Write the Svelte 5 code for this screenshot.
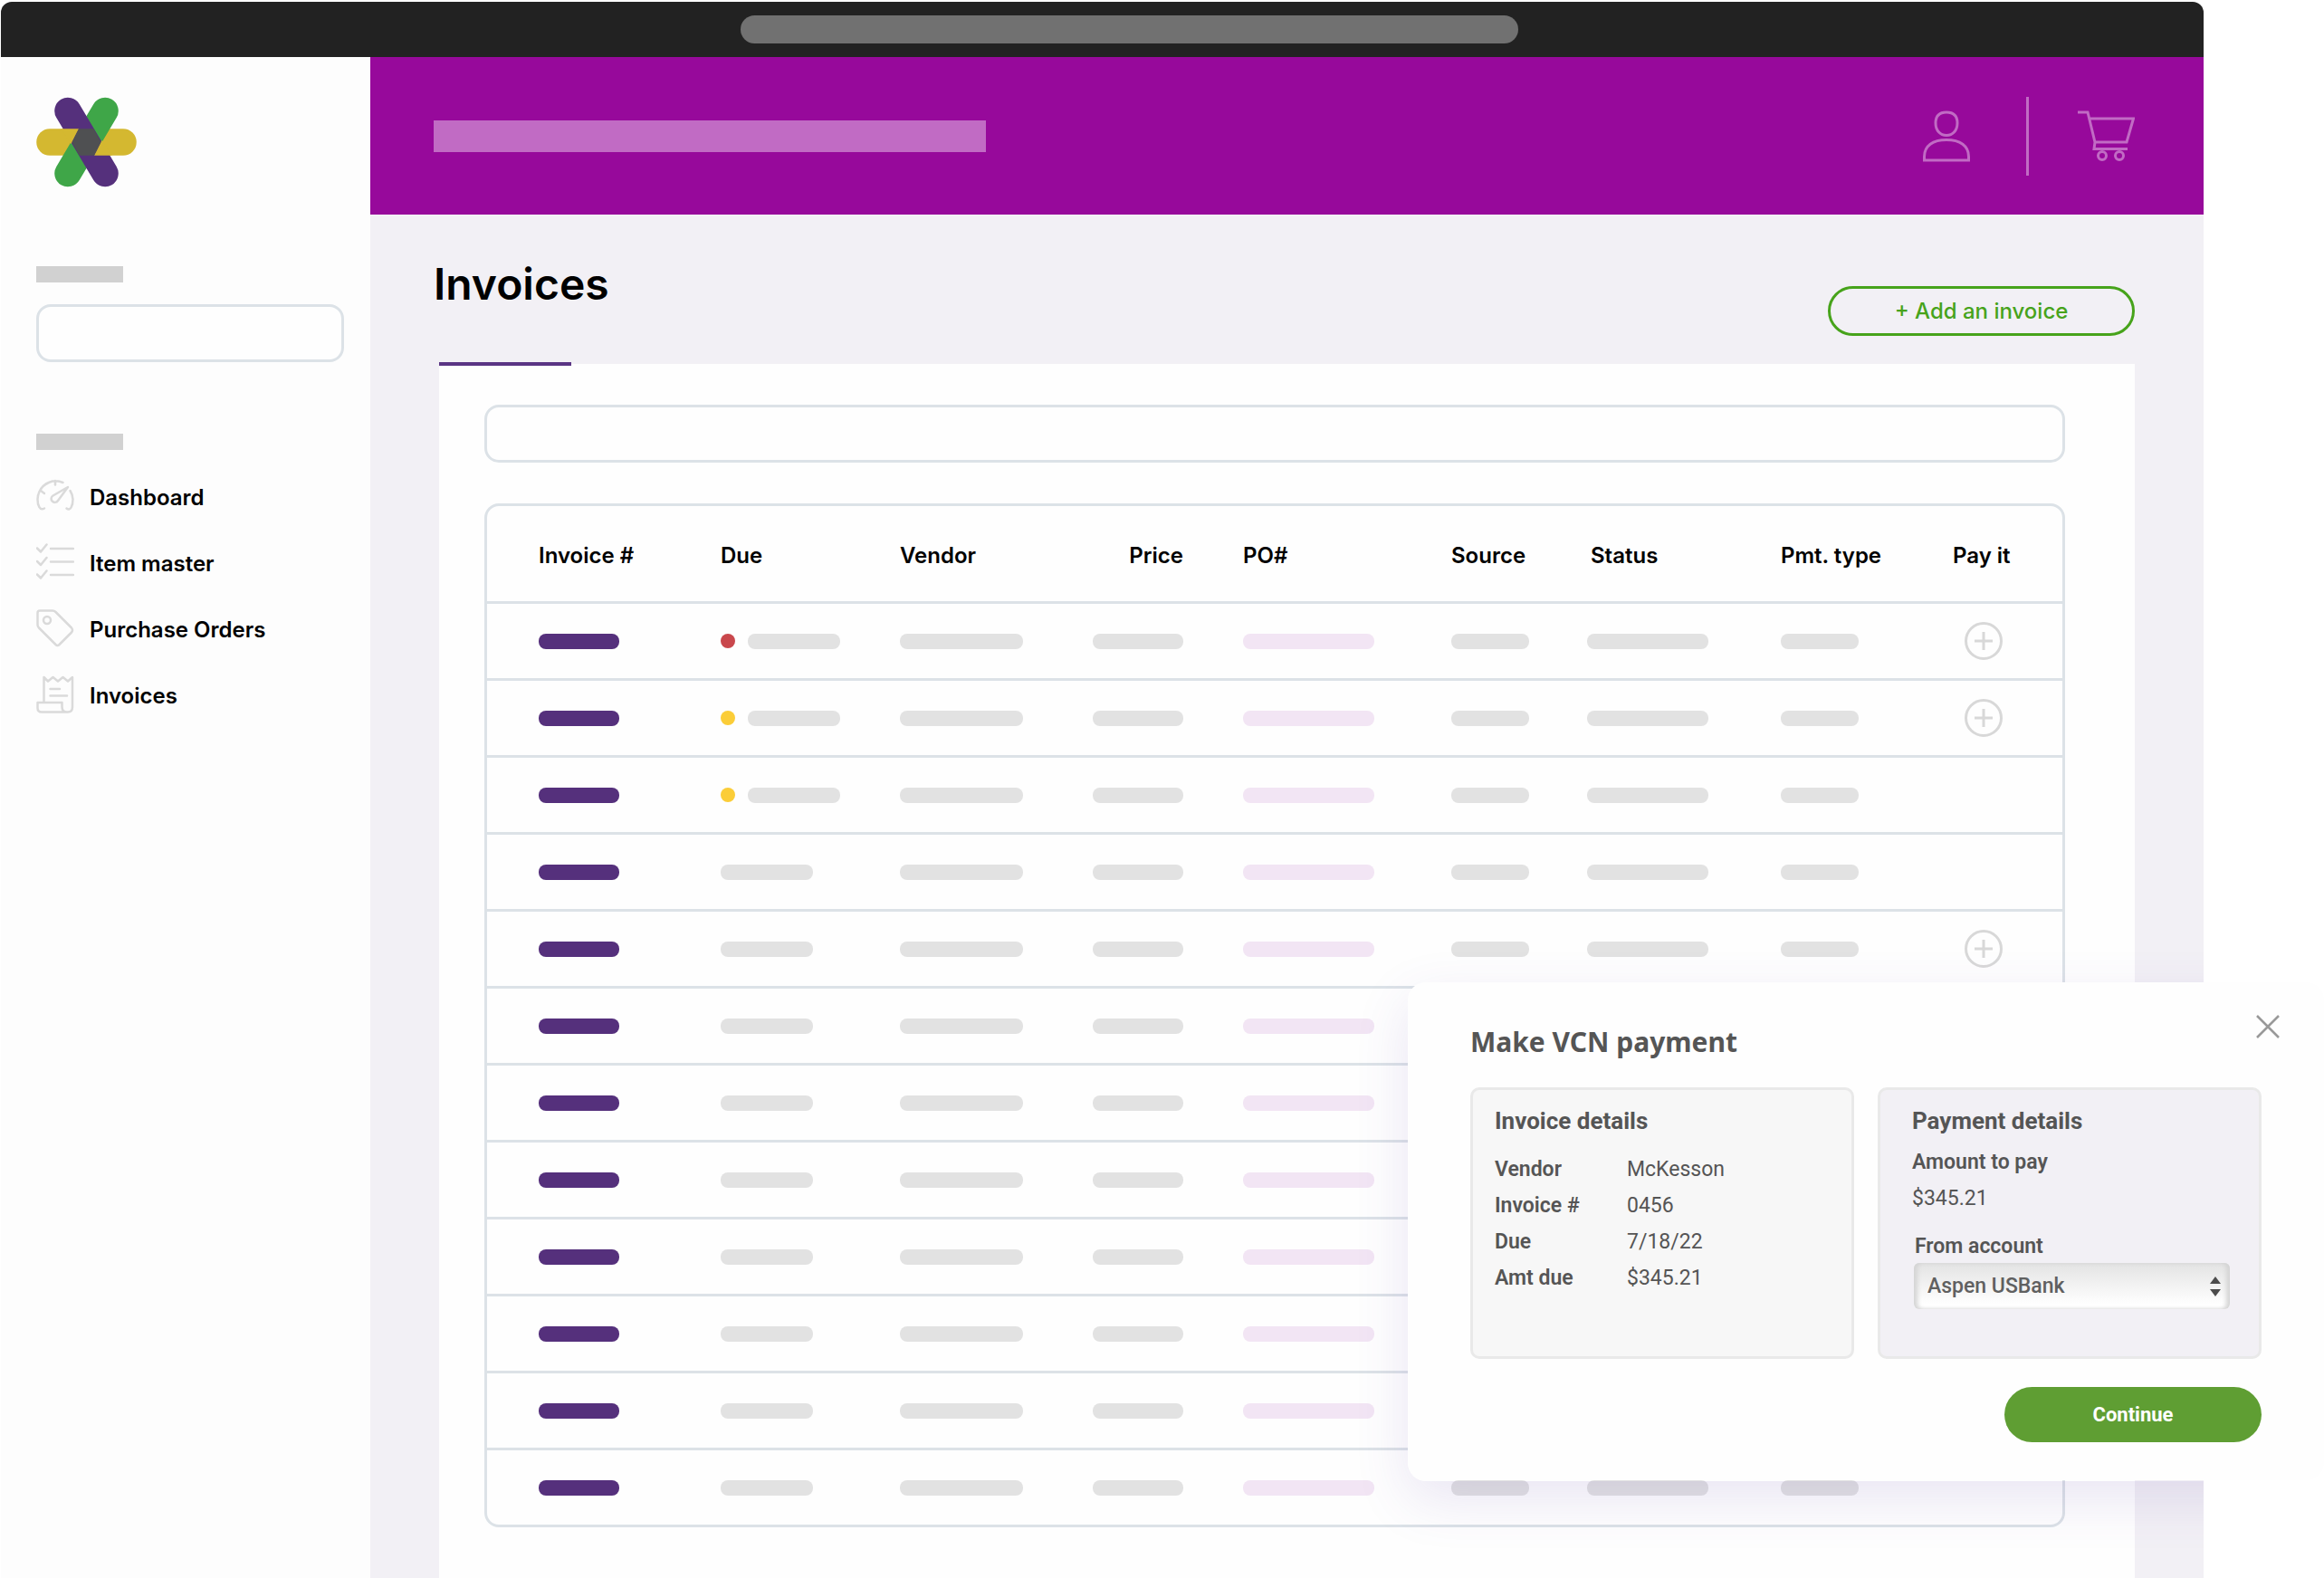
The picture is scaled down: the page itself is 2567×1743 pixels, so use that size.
<script>
  let sidebarSearch = $state('');
  let invoiceSearch = $state('');
  let account = $state('Aspen USBank');
  let showPayment = $state(true);

  const nav = [
    { label: 'Dashboard', icon: 'gauge' },
    { label: 'Item master', icon: 'list' },
    { label: 'Purchase Orders', icon: 'tag' },
    { label: 'Invoices', icon: 'receipt' },
  ];

  const rows = [
    { due: 'late', payable: true },
    { due: 'soon', payable: true },
    { due: 'soon', payable: false },
    { due: '', payable: false },
    { due: '', payable: true },
    { due: '', payable: false },
    { due: '', payable: false },
    { due: '', payable: false },
    { due: '', payable: false },
    { due: '', payable: false },
    { due: '', payable: false },
    { due: '', payable: false },
  ];

  const details = [
    ['Vendor', 'McKesson'],
    ['Invoice #', '0456'],
    ['Due', '7/18/22'],
    ['Amt due', '$345.21'],
  ];
</script>

<div class="page">
  <div class="window">
    <div class="titlebar"><span class="address"></span></div>

    <div class="body">
      <aside>
        <svg class="logo" viewBox="0 0 112 100" aria-hidden="true">
          <g fill="none" stroke-width="29.500" stroke-linecap="round">
            <path stroke="#d4b830" d="M15 50H96" />
            <path stroke="#3fa648" d="M76 15.500L35 84.500" />
            <path stroke="#55307c" d="M35 15.500L76 84.500" />
          </g>
          <path fill="#d4b830" d="M27 35.300H47L38.500 52ZM84 64.700H64L72.500 48Z" />
          <path fill="#4f5052" d="M47 35.300H63.500L71.500 50L64 64.700H47.500L39.500 50Z" />
        </svg>
        <div class="caption"></div>
        <input class="field side-field" type="text" aria-label="Search" bind:value={sidebarSearch} />
        <div class="caption second"></div>

        <nav>
          {#each nav as item}
            <a href="#{item.icon}">
              <svg viewBox="0 0 42 42" aria-hidden="true">
                {#if item.icon === 'gauge'}
                  <path d="M9 34.500C4 37.500 1.500 31 1.500 24.500A20 20 0 0 1 3.500 16A20 20 0 0 1 29.500 6M33.500 34.500C38 38 40.500 31 40.500 24.500A20 20 0 0 0 37.500 15M21 4V8.500M5 15L9 18M35 11L24 26A4 4 0 1 1 18.500 20.500Z" />
                {:else if item.icon === 'list'}
                  <path d="M16 6H41M16 20.500H41M16 35H41M1 5.500L5 9.500L11.500 1.500M1 20L5 24L11.500 16M1 34.500L5 38.500L11.500 30.500" />
                {:else if item.icon === 'tag'}
                  <path d="M4 1.500H18Q20 1.500 21.500 3L39 20.500Q41 23 39 25.500L25.500 39Q23.500 41 21.500 39L3 20.500Q1.500 19 1.500 17V4Q1.500 1.500 4 1.500Z" />
                  <circle cx="12" cy="12" r="4" />
                {:else}
                  <path d="M8.500 29V2L13 6.500L18.500 2L24 6.500L29.500 2L35 6.500L40 2V35Q40 40.500 35 40.500H6Q1.500 40.500 1.500 36V30H28.500V35Q28.500 40.500 34 40.500M15.500 15H26M15.500 22.500H34" />
                {/if}
              </svg>
              <span>{item.label}</span>
            </a>
          {/each}
        </nav>
      </aside>

      <main>
        <header>
          <div class="headline"></div>
          <div class="actions">
            <button class="icon-btn" aria-label="Account">
              <svg class="user" viewBox="0 0 52 58">
                <path d="M26 3C34 3 38 7 38 15C38 23 33 28.500 26 28.500S14 23 14 15C14 7 18 3 26 3ZM1.500 56V52C1.500 40 11 33.500 26 33.500S50.500 40 50.500 52V56Z" />
              </svg>
            </button>
            <span class="divider"></span>
            <button class="icon-btn" aria-label="Cart">
              <svg class="cart" viewBox="0 0 63 58">
                <path d="M0 3H11L19 36H54L61.500 10H13M19 36L18 43.500H55" />
                <circle cx="27" cy="51" r="4.500" />
                <circle cx="46" cy="51" r="4.500" />
              </svg>
            </button>
          </div>
        </header>

        <div class="page-head">
          <h1>Invoices</h1>
          <button class="add">+ Add an invoice</button>
        </div>

        <section class="card">
          <div class="tab"></div>
          <input class="field" type="text" aria-label="Search invoices" bind:value={invoiceSearch} />

          <div class="table-wrap">
            <table>
              <colgroup>
                <col class="c-invoice" />
                <col class="c-due" />
                <col class="c-vendor" />
                <col class="c-price" />
                <col class="c-po" />
                <col class="c-source" />
                <col class="c-status" />
                <col class="c-type" />
                <col class="c-pay" />
              </colgroup>
              <thead>
                <tr>
                  <th>Invoice #</th>
                  <th>Due</th>
                  <th>Vendor</th>
                  <th class="price"><span>Price</span></th>
                  <th>PO#</th>
                  <th>Source</th>
                  <th class="status">Status</th>
                  <th>Pmt. type</th>
                  <th>Pay it</th>
                </tr>
              </thead>
              <tbody>
                {#each rows as row}
                  <tr>
                    <td><i class="bar invoice"></i></td>
                    <td>
                      <div class="due">
                        {#if row.due}<i class="dot {row.due}"></i>{/if}
                        <i class="bar w102"></i>
                      </div>
                    </td>
                    <td><i class="bar w136"></i></td>
                    <td><i class="bar w100"></i></td>
                    <td><i class="bar po"></i></td>
                    <td><i class="bar w86"></i></td>
                    <td><i class="bar w134"></i></td>
                    <td><i class="bar w86"></i></td>
                    <td>
                      {#if row.payable}
                        <button class="pay" aria-label="Pay invoice" onclick={() => (showPayment = true)}>
                          <svg viewBox="0 0 42 42">
                            <circle cx="21" cy="21" r="19.500" />
                            <path d="M21 11V31M11 21H31" />
                          </svg>
                        </button>
                      {/if}
                    </td>
                  </tr>
                {/each}
              </tbody>
            </table>
          </div>
        </section>
      </main>
    </div>
    {#if showPayment}<div class="glow"></div>{/if}
  </div>

  {#if showPayment}
    <div class="modal" role="dialog" aria-labelledby="pay-title">
      <div class="modal-head">
        <h2 id="pay-title">Make VCN payment</h2>
        <button class="close" aria-label="Close" onclick={() => (showPayment = false)}>
          <svg viewBox="0 0 26 26"><path d="M1 1L25 25M25 1L1 25" /></svg>
        </button>
      </div>

      <div class="panels">
        <section class="panel">
          <h3>Invoice details</h3>
          <dl>
            {#each details as [name, value]}
              <dt>{name}</dt>
              <dd>{value}</dd>
            {/each}
          </dl>
        </section>

        <section class="panel payment">
          <h3>Payment details</h3>
          <div class="amount">
            <strong>Amount to pay</strong>
            <span>$345.21</span>
          </div>
          <label for="account">From account</label>
          <div class="select">
            <select id="account" bind:value={account}>
              <option>Aspen USBank</option>
            </select>
            <svg viewBox="0 0 14 22" aria-hidden="true"><path d="M7 0L13 8H1ZM7 22L13 14H1Z" /></svg>
          </div>
        </section>
      </div>

      <button class="continue">Continue</button>
    </div>
  {/if}
</div>

<style>
  :global(body) {
    background: #fff;
  }

  * {
    box-sizing: border-box;
  }

  .page {
    position: relative;
    min-height: 100vh;
    padding: 2px 133px 0 1px;
    overflow: hidden;
    display: flex;
    font-family: Inter, "Liberation Sans", sans-serif;
    color: #000;
  }

  button {
    padding: 0;
    border: none;
    background: none;
    font-family: inherit;
    cursor: pointer;
  }

  svg {
    display: block;
    fill: none;
  }

  .window {
    position: relative;
    flex: 1;
    display: flex;
    flex-direction: column;
    border-radius: 12px 12px 0 0;
    overflow: hidden;
    background: #fdfdfd;
  }

  .titlebar {
    height: 61px;
    background: #222;
    display: flex;
    align-items: center;
    justify-content: center;
  }

  .address {
    width: 859px;
    height: 31px;
    margin-left: 60px;
    border-radius: 16px;
    background: #717171;
  }

  .body {
    flex: 1;
    display: flex;
  }

  /* sidebar */
  aside {
    width: 408px;
    flex: none;
    padding: 44px 29px 0 39px;
    background: #fdfdfd;
  }

  .logo {
    width: 112px;
    height: 100px;
  }

  .caption {
    width: 96px;
    height: 18px;
    margin-top: 87px;
    background: #d1d1d1;
  }

  .caption.second {
    margin-top: 79px;
  }

  .field {
    display: block;
    width: 100%;
    height: 64px;
    padding: 0 20px;
    border: 3px solid #dce2e7;
    border-radius: 16px;
    background: #fefefe;
    font: 500 24px Inter, sans-serif;
    outline: none;
  }

  .side-field {
    margin-top: 24px;
  }

  nav {
    margin-top: 30px;
    display: flex;
    flex-direction: column;
    gap: 30px;
  }

  nav a {
    height: 43px;
    display: flex;
    gap: 17px;
    color: #000;
    font-size: 24px;
    font-weight: 600;
    line-height: 46px;
    text-decoration: none;
  }

  nav svg {
    width: 42px;
    height: 42px;
    stroke: #dadada;
    stroke-width: 2.5;
    stroke-linecap: round;
    stroke-linejoin: round;
  }

  /* main column */
  main {
    flex: 1;
    display: flex;
    flex-direction: column;
    background: #f2f0f5;
  }

  header {
    height: 174px;
    padding: 0 77px 0 70px;
    display: flex;
    align-items: center;
    justify-content: space-between;
    background: #97099b;
  }

  .headline {
    width: 610px;
    height: 35px;
    background: #c16bc4;
  }

  .actions {
    display: flex;
    align-items: center;
  }

  .icon-btn svg {
    height: 58px;
    stroke: #c16bc4;
    stroke-width: 3;
  }

  .user {
    width: 52px;
  }

  .cart {
    width: 63px;
  }

  .divider {
    width: 3px;
    height: 87px;
    margin: 0 54px 0 62px;
    background: #c16bc4;
  }

  .page-head {
    height: 165px;
    padding: 49px 77px 0 70px;
    display: flex;
    align-items: flex-start;
    justify-content: space-between;
  }

  h1 {
    margin: 0;
    font-size: 48px;
    font-weight: 600;
    line-height: 56px;
  }

  .add {
    width: 339px;
    height: 55px;
    margin-top: 30px;
    border: 3px solid #47a31b;
    border-radius: 28px;
    color: #47a31b;
    font-size: 24px;
    font-weight: 500;
  }

  .card {
    position: relative;
    flex: 1;
    margin: 0 77px 0 76px;
    padding: 45px 77px 58px 50px;
    background: #fefefe;
  }

  .tab {
    position: absolute;
    top: -2px;
    left: 0;
    width: 146px;
    height: 4px;
    background: #5a3584;
  }

  .table-wrap {
    margin-top: 45px;
    border: 3px solid #dce2e7;
    border-radius: 16px;
    overflow: hidden;
  }

  table {
    width: 100%;
    table-layout: fixed;
    border-collapse: separate;
    border-spacing: 0;
  }

  .c-invoice { width: 258px; }
  .c-due { width: 198px; }
  .c-vendor { width: 213px; }
  .c-price { width: 166px; }
  .c-po { width: 230px; }
  .c-source { width: 150px; }
  .c-status { width: 214px; }
  .c-type { width: 190px; }
  .c-pay { width: 121px; }

  th {
    height: 108px;
    padding: 3px 0 0;
    border-bottom: 3px solid #dce2e7;
    font-size: 24px;
    font-weight: 600;
    text-align: left;
    white-space: nowrap;
  }

  th.price span {
    display: block;
    width: 100px;
    text-align: right;
  }

  th.status {
    padding-left: 4px;
  }

  td {
    height: 85px;
    padding: 0;
    border-bottom: 3px solid #dce2e7;
  }

  th:first-child,
  td:first-child {
    padding-left: 57px;
  }

  tr:last-child td {
    height: 82px;
    border-bottom: none;
  }

  .bar {
    display: block;
    height: 17px;
    border-radius: 8px;
    background: #e2e2e2;
  }

  .invoice {
    width: 89px;
    background: #55307c;
  }

  .po {
    width: 145px;
    background: #f2e5f4;
  }

  .w86 { width: 86px; }
  .w100 { width: 100px; }
  .w102 { width: 102px; }
  .w134 { width: 134px; }
  .w136 { width: 136px; }

  .due {
    display: flex;
    align-items: center;
    gap: 14px;
  }

  .dot {
    width: 16px;
    height: 16px;
    border-radius: 50%;
  }

  .late { background: #c9474c; }
  .soon { background: #fbcd38; }

  .pay {
    display: block;
    margin-left: 13px;
  }

  .pay svg {
    width: 42px;
    height: 42px;
    stroke: #d8d8d8;
    stroke-width: 3;
  }

  /* payment dialog */
  .glow {
    position: absolute;
    top: 1083px;
    right: -133px;
    width: 1012px;
    height: 551px;
    border-radius: 20px;
    box-shadow: 0 20px 60px rgba(90, 60, 170, 0.13);
    pointer-events: none;
  }

  .modal {
    position: absolute;
    top: 1085px;
    right: 0;
    width: 1012px;
    padding: 36px 69px 42px;
    border-radius: 20px;
    background: #fefefe;
    font-family: Roboto, sans-serif;
    color: #555;
  }

  .modal-head {
    height: 80px;
    display: flex;
    align-items: flex-start;
    justify-content: space-between;
  }

  h2 {
    margin: 10px 0 0;
    font-family: "Noto Sans", sans-serif;
    font-size: 30px;
    font-weight: 700;
    line-height: 40px;
  }

  .close {
    margin-right: -20px;
  }

  .close svg {
    width: 26px;
    height: 26px;
    stroke: #999;
    stroke-width: 2.5;
  }

  .panels {
    display: grid;
    grid-template-columns: 1fr 1fr;
    gap: 26px;
  }

  .panel {
    min-height: 300px;
    padding: 17px 24px;
    border: 3px solid #e9e9e9;
    border-radius: 10px;
    background: #f7f7f7;
    font-size: 23px;
    line-height: 40px;
  }

  .payment {
    padding: 17px 32px 17px 35px;
    background: #f2f0f5;
  }

  h3 {
    margin: 0;
    font-size: 26px;
    font-weight: 700;
    line-height: 34px;
  }

  dl {
    display: grid;
    grid-template-columns: 146px 1fr;
    margin: 17px 0 0;
  }

  dt,
  .amount strong,
  label {
    font-weight: 600;
  }

  dd {
    margin: 0;
  }

  .amount {
    display: flex;
    flex-direction: column;
    margin-top: 9px;
  }

  label {
    display: block;
    margin-top: 15px;
    padding-left: 3px;
    line-height: 36px;
  }

  .select {
    position: relative;
    margin-left: 2px;
  }

  select {
    appearance: none;
    display: block;
    width: 100%;
    height: 51px;
    padding: 0 40px 0 15px;
    border: none;
    border-radius: 6px;
    background: linear-gradient(#e3e3e3, #fff 90%);
    box-shadow: inset 5px 0 5px -1px #d4d4d4, inset -5px 0 5px -1px #d4d4d4;
    color: #606060;
    font: 500 23px Roboto, sans-serif;
  }

  .select svg {
    position: absolute;
    top: 15px;
    right: 9px;
    width: 14px;
    height: 22px;
    fill: #4c4c4c;
    pointer-events: none;
  }

  .continue {
    display: block;
    width: 284px;
    height: 61px;
    margin: 31px 0 0 auto;
    border-radius: 31px;
    background: #5f9e33;
    color: #fff;
    font-size: 22px;
    font-weight: 700;
  }
</style>
